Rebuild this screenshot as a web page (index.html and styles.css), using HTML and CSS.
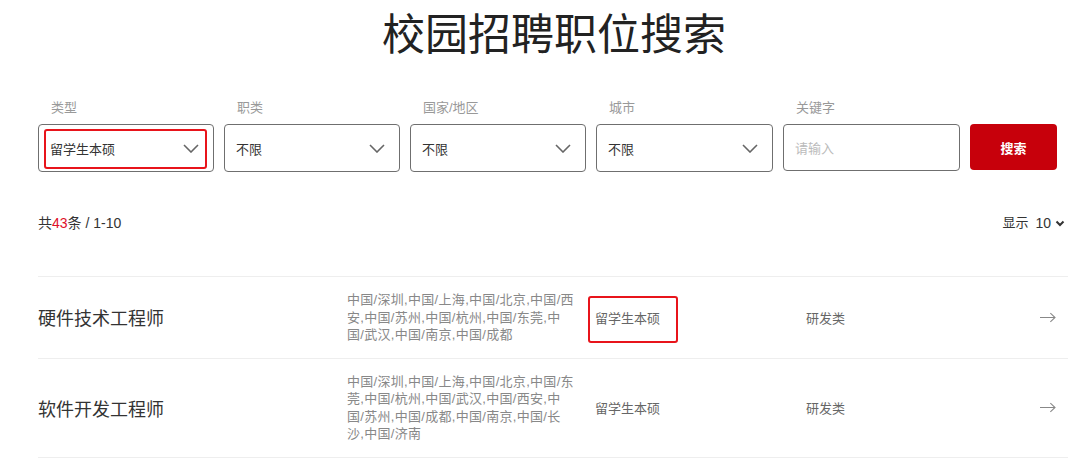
FILE: index.html
```html
<!DOCTYPE html>
<html lang="zh-CN">
<head>
<meta charset="utf-8">
<title>校园招聘职位搜索</title>
<link rel="stylesheet" href="styles.css">
</head>
<body>
<div class="page">
  <h1 class="title">校园招聘职位搜索</h1>

  <div class="filters">
    <div class="field">
      <div class="label">类型</div>
      <div class="select">
        <span class="value">留学生本硕</span>
        <svg class="chev" viewBox="0 0 16 9" width="16" height="9"><path d="M1 1 L8 8 L15 1" fill="none" stroke="#666" stroke-width="1.6"/></svg>
        <span class="mark mark-select"></span>
      </div>
    </div>
    <div class="field">
      <div class="label">职类</div>
      <div class="select">
        <span class="value">不限</span>
        <svg class="chev" viewBox="0 0 16 9" width="16" height="9"><path d="M1 1 L8 8 L15 1" fill="none" stroke="#666" stroke-width="1.6"/></svg>
      </div>
    </div>
    <div class="field">
      <div class="label">国家/地区</div>
      <div class="select">
        <span class="value">不限</span>
        <svg class="chev" viewBox="0 0 16 9" width="16" height="9"><path d="M1 1 L8 8 L15 1" fill="none" stroke="#666" stroke-width="1.6"/></svg>
      </div>
    </div>
    <div class="field">
      <div class="label">城市</div>
      <div class="select">
        <span class="value">不限</span>
        <svg class="chev" viewBox="0 0 16 9" width="16" height="9"><path d="M1 1 L8 8 L15 1" fill="none" stroke="#666" stroke-width="1.6"/></svg>
      </div>
    </div>
    <div class="field">
      <div class="label">关键字</div>
      <div class="select input">
        <span class="placeholder">请输入</span>
      </div>
    </div>
    <div class="field">
      <div class="label">&nbsp;</div>
      <button class="btn">搜索</button>
    </div>
  </div>

  <div class="summary">
    <div class="count">共<span class="num">43</span>条 / 1-10</div>
    <div class="pager">显示 <span class="size">10</span>
      <svg class="small-chev" viewBox="0 0 10 7" width="10" height="7"><path d="M1.5 1.5 L5 5 L8.5 1.5" fill="none" stroke="#333" stroke-width="2"/></svg>
    </div>
  </div>

  <div class="list">
    <div class="row">
      <div class="job">硬件技术工程师</div>
      <div class="loc">中国/深圳,中国/上海,中国/北京,中国/西<br>安,中国/苏州,中国/杭州,中国/东莞,中<br>国/武汉,中国/南京,中国/成都</div>
      <div class="type"><span class="type-text">留学生本硕<span class="mark mark-type"></span></span></div>
      <div class="cat">研发类</div>
      <div class="arrow"><svg viewBox="0 0 17 11" width="17" height="11"><path d="M0 5.5 H16 M11 0.8 L16 5.5 L11 10.2" fill="none" stroke="#888" stroke-width="1.1"/></svg></div>
    </div>
    <div class="row">
      <div class="job">软件开发工程师</div>
      <div class="loc">中国/深圳,中国/上海,中国/北京,中国/东<br>莞,中国/杭州,中国/武汉,中国/西安,中<br>国/苏州,中国/成都,中国/南京,中国/长<br>沙,中国/济南</div>
      <div class="type"><span class="type-text">留学生本硕</span></div>
      <div class="cat">研发类</div>
      <div class="arrow"><svg viewBox="0 0 17 11" width="17" height="11"><path d="M0 5.5 H16 M11 0.8 L16 5.5 L11 10.2" fill="none" stroke="#888" stroke-width="1.1"/></svg></div>
    </div>
  </div>
</div>
</body>
</html>
```

FILE: styles.css
```css
* { box-sizing: border-box; }
html, body { margin: 0; padding: 0; background: #fff; }
body {
  font-family: "Liberation Sans", "Noto Sans CJK SC", sans-serif;
  color: #333;
  font-size: 13px;
}
.page {
  width: 1030px;
  margin-left: 38px;
}
.title {
  margin: 0;
  padding-top: 10px;
  font-size: 43px;
  line-height: 50px;
  font-weight: normal;
  text-align: center;
  color: #222;
  padding-left: 2px;
}
.filters {
  margin-top: 40px;
  display: grid;
  grid-template-columns: 176px 176px 176px 177px 177px 87px;
  column-gap: 10px;
}
.field { display: flex; flex-direction: column; gap: 8px; }
.label {
  font-size: 13px;
  line-height: 16px;
  color: #999;
  padding-left: 13px;
}
.select {
  position: relative;
  height: 48px;
  border: 1px solid #6f6f6f;
  border-radius: 4px;
  display: flex;
  align-items: center;
  justify-content: space-between;
  padding: 0 14px 0 11px;
}
.select .value { font-size: 13px; color: #333; }
.chev { display: block; }
.input { height: 47px; }
.placeholder { color: #bbb; font-size: 13px; }
.mark {
  position: absolute;
  border: 2px solid #e8141b;
  border-radius: 3px;
}
.mark-select { left: 5px; right: 6px; top: 4px; bottom: 2px; }
.btn {
  height: 46px;
  border: none;
  border-radius: 4px;
  background: #c7000b;
  color: #fff;
  font-family: inherit;
  font-size: 13px;
  font-weight: bold;
  padding: 0;
}
.summary {
  margin-top: 43px;
  display: flex;
  justify-content: space-between;
  align-items: center;
  line-height: 16px;
  font-size: 14px;
  padding-right: 3px;
}
.count { color: #333; }
.num { color: #e0102a; }
.pager { display: flex; align-items: center; gap: 4px; color: #333; font-size: 13px; }
.size { margin-left: 3px; font-size: 14px; }
.small-chev { display: block; }
.list {
  margin-top: 45px;
  border-top: 1px solid #eee;
}
.row {
  display: grid;
  grid-template-columns: 309px 248px 211px 1fr 16px;
  align-items: center;
  padding: 14px 12px 14px 0;
  border-bottom: 1px solid #eee;
}
.job { font-size: 18px; color: #333; }
.loc {
  font-size: 13px;
  line-height: 17.5px;
  color: #888;
  white-space: nowrap;
  letter-spacing: 0.3px;
}
.type { font-size: 13px; color: #666; }
.type-text { position: relative; display: inline-block; }
.mark-type { left: -7px; right: -18px; top: -12px; bottom: -16px; }
.cat { font-size: 13px; color: #666; }
.arrow { display: flex; justify-content: flex-end; }
.arrow svg { display: block; }
```
